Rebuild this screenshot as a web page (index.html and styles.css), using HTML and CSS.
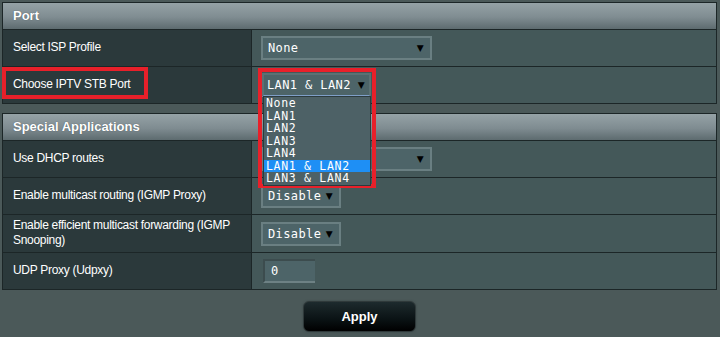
FILE: index.html
```html
<!DOCTYPE html>
<html>
<head>
<meta charset="utf-8">
<link rel="stylesheet" href="styles.css">
</head>
<body>
<div class="page">
  <div class="section">
    <div class="head">Port</div>
    <div class="row">
      <div class="label">Select ISP Profile</div>
      <div class="value"><div class="select wide"><span>None</span><span class="arrow">▼</span></div></div>
    </div>
    <div class="row">
      <div class="label">Choose IPTV STB Port</div>
      <div class="value"><div class="select open"><span>LAN1 &amp; LAN2</span><span class="arrow">▼</span></div></div>
    </div>
  </div>

  <div class="section second">
    <div class="head">Special Applications</div>
    <div class="row">
      <div class="label">Use DHCP routes</div>
      <div class="value"><div class="select wide"><span></span><span class="arrow">▼</span></div></div>
    </div>
    <div class="row">
      <div class="label">Enable multicast routing (IGMP Proxy)</div>
      <div class="value"><div class="select"><span>Disable</span><span class="arrow">▼</span></div></div>
    </div>
    <div class="row tall">
      <div class="label">Enable efficient multicast forwarding (IGMP Snooping)</div>
      <div class="value"><div class="select"><span>Disable</span><span class="arrow">▼</span></div></div>
    </div>
    <div class="row">
      <div class="label">UDP Proxy (Udpxy)</div>
      <div class="value"><div class="input">0</div></div>
    </div>
  </div>

  <div class="actions"><button class="apply">Apply</button></div>

  <div class="mark mark-label"></div>
  <div class="mark mark-select"></div>
  <ul class="listbox">
    <li>None</li>
    <li>LAN1</li>
    <li>LAN2</li>
    <li>LAN3</li>
    <li>LAN4</li>
    <li class="sel">LAN1 &amp; LAN2</li>
    <li>LAN3 &amp; LAN4</li>
  </ul>
</div>
</body>
</html>
```
FILE: styles.css
```css
* { box-sizing: border-box; }
html, body { margin: 0; padding: 0; }
body {
  background: #4b5959;
  font-family: "Liberation Sans", Arial, sans-serif;
  font-size: 12px;
  color: #fff;
  width: 720px;
  height: 337px;
  overflow: hidden;
}
.page {
  position: relative;
  padding: 2px 3px 0 2px;
}
.section {
  border: 1px solid #1c2627;
  background: #1c2627;
  display: flex;
  flex-direction: column;
  gap: 1px;
}
.section.second { margin-top: 9px; }
.head {
  height: 26px;
  line-height: 26px;
  padding-left: 10px;
  font-weight: bold;
  font-size: 13px;
  background: linear-gradient(#95a2a6, #7f8c91 55%, #5d6b6f);
  text-shadow: 0 0 1px #3c4a50;
}
.row {
  display: grid;
  grid-template-columns: 248px 1fr;
  gap: 1px;
  height: 36px;
}
.row.tall { height: 37px; }
.label {
  background: #2b393b;
  padding-left: 10px;
  padding-bottom: 1px;
  display: flex;
  align-items: center;
  line-height: 15px;
  letter-spacing: -0.3px;
}
.row.tall .label { padding-right: 6px; }
.value {
  background: #445859;
  display: flex;
  align-items: center;
  padding-left: 9px;
}
.select {
  height: 24px;
  width: 80px;
  background: #4d6468;
  border: 2px solid #6a7f82;
  display: flex;
  align-items: center;
  justify-content: space-between;
  padding: 0 6px 0 5px;
  font-family: "DejaVu Sans Mono", monospace;
  font-size: 12px;
  letter-spacing: 0.4px;
}
.select.wide { width: 171px; }
.select.open {
  width: 109px;
  border-color: #5b7174;
  border-bottom-color: #7f9fc8;
  margin-left: 1px;
  padding: 0 4px 0 3px;
}
.arrow {
  color: #000;
  font-size: 9px;
  font-family: "DejaVu Sans", sans-serif;
}
.input {
  margin-left: 2px;
  width: 52px;
  height: 24px;
  background: #4d6468;
  border: 2px solid #6d8184;
  border-top-color: #3c4c4e;
  border-left-color: #3c4c4e;
  border-right: none;
  padding-left: 6px;
  line-height: 20px;
  font-family: "DejaVu Sans Mono", monospace;
  font-size: 12px;
}
.actions {
  display: flex;
  justify-content: center;
  padding-top: 11px;
}
.apply {
  width: 113px;
  height: 31px;
  border-radius: 6px;
  border: 1px solid #2f393a;
  background: linear-gradient(#1d2a2d, #0a1214 60%, #000);
  color: #fff;
  font-family: "Liberation Sans", Arial, sans-serif;
  font-weight: bold;
  font-size: 13px;
  box-shadow: 0 0 2px #384446;
}
.mark {
  position: absolute;
  border: 4px solid #e8202a;
}
.mark-label { left: 2px; top: 67px; width: 146px; height: 32px; }
.mark-select { left: 258px; top: 68px; width: 118px; height: 120px; }
.listbox {
  position: absolute;
  left: 263px;
  top: 96px;
  width: 108px;
  margin: 0;
  padding: 0;
  list-style: none;
  background: #4d6166;
  border: 1px solid #2c3b3e;
  font-family: "DejaVu Sans Mono", monospace;
  font-size: 11.5px;
  letter-spacing: 0.7px;
}
.listbox li {
  height: 12.5px;
  line-height: 12.5px;
  padding-left: 2px;
}
.listbox li.sel { background: #1e8ff5; }
```
